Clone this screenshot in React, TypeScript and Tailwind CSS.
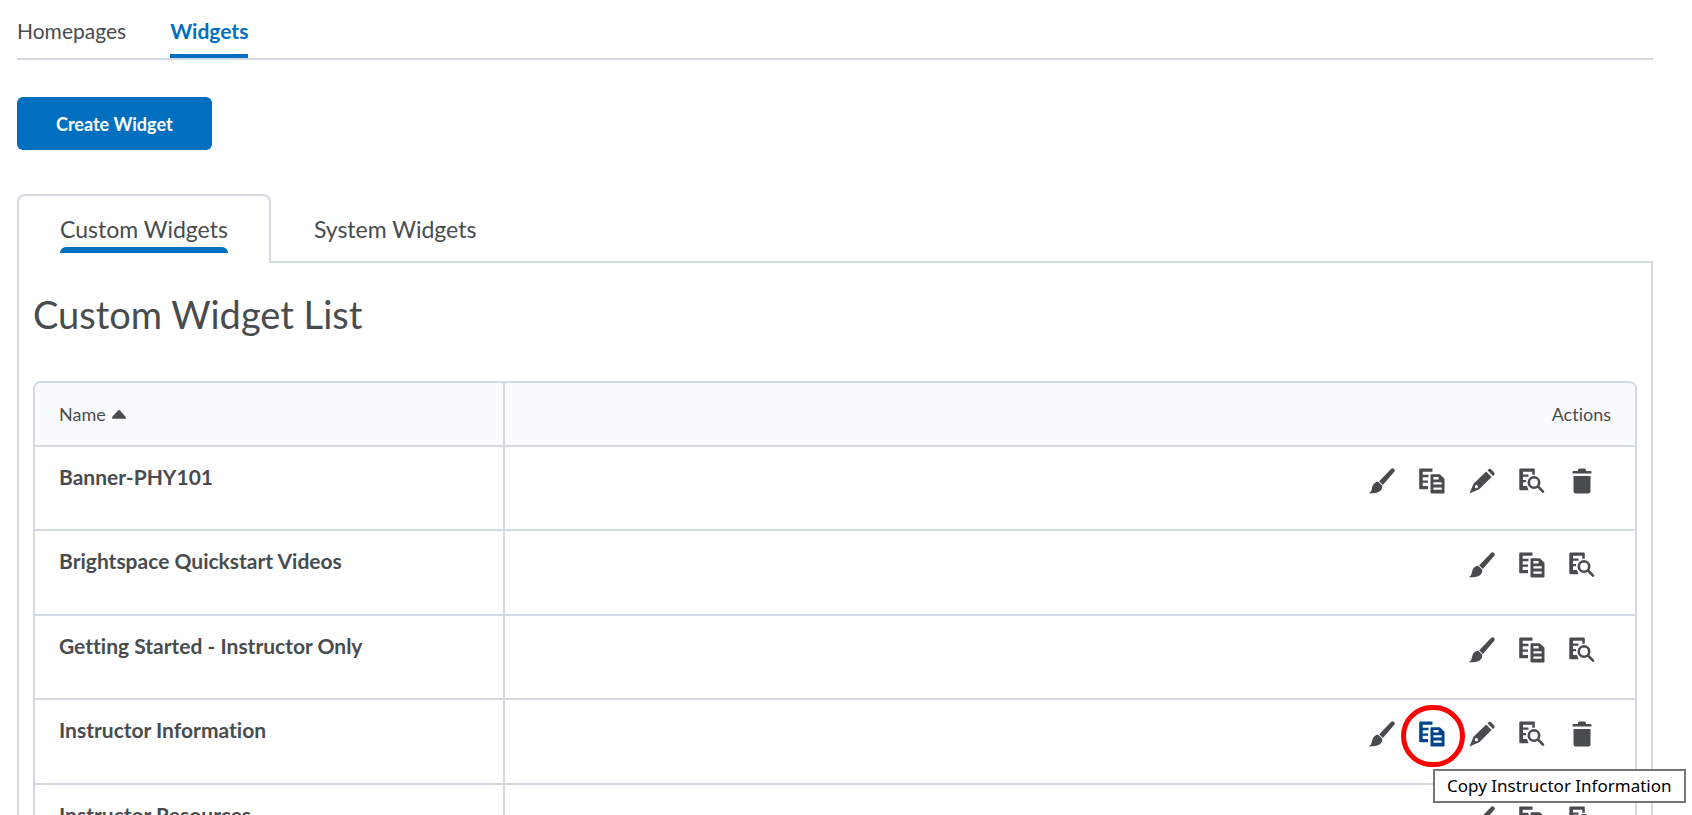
import { useState } from "react";

type Action = "style" | "copy" | "edit" | "preview" | "delete";

interface Widget {
  name: string;
  actions: Action[];
}

const widgets: Widget[] = [
  {
    name: "Banner-PHY101",
    actions: ["style", "copy", "edit", "preview", "delete"],
  },
  {
    name: "Brightspace Quickstart Videos",
    actions: ["style", "copy", "preview"],
  },
  {
    name: "Getting Started - Instructor Only",
    actions: ["style", "copy", "preview"],
  },
  {
    name: "Instructor Information",
    actions: ["style", "copy", "edit", "preview", "delete"],
  },
  { name: "Instructor Resources", actions: ["style", "copy", "preview"] },
];

const labels: Record<Action, string> = {
  style: "Customize",
  copy: "Copy",
  edit: "Edit",
  preview: "Preview",
  delete: "Delete",
};

const ActionIcon = ({ action }: { action: Action }) => {
  return (
    <svg
      viewBox="0 0 26 26"
      className="h-[26px] w-[26px]"
      fill="currentColor"
      aria-hidden="true"
    >
      {action === "style" && (
        <>
          <path d="M22 1.100a2.100 2.100 0 0 1 3.100 3L13.900 16.900l-3.700-3.600z" />
          <path d="M9.300 13.800l4 3.900c.2 3-1.700 5.800-4.900 6.800-2.700.8-5.500.9-8 .9 0-.9.7-1.200 1.400-1.900 1-1.100.9-2.900 1.600-5 .8-2.600 3-4.700 5.900-4.700z" />
        </>
      )}
      {action === "copy" && (
        <>
          <path d="M1.200.5h12.300v3.300H3.700v3h5.800v2.400H3.700v3.200h5.300v2.400H3.700v3.200h5.300v3.300H1.200a1 1 0 0 1-1-1V1.500a1 1 0 0 1 1-1z" />
          <path
            fillRule="evenodd"
            d="M12.500 6.200h8.300l4.700 4.600v13.700a1 1 0 0 1-1 1h-12a1 1 0 0 1-1-1V7.200a1 1 0 0 1 1-1zM14.400 9v2.400h5.200V9zM14.400 14.200v2.300h8.300v-2.300zM14.400 19.500v2.300h8.300v-2.300z"
          />
        </>
      )}
      {action === "edit" && (
        <>
          <path d="M19.300 1.500a2.200 2.200 0 0 1 3 0l2.600 2.700a2.200 2.200 0 0 1 0 3l-.8.8-5.600-5.700z" />
          <path
            fillRule="evenodd"
            d="M17.200 3.600l5.400 5.500L10.200 21.300.5 25.600l4-9.900zM7.300 17.100a1.600 1.600 0 1 0 .1 3.200 1.600 1.600 0 0 0-.1-3.200z"
          />
        </>
      )}
      {action === "preview" && (
        <>
          <path d="M1.300.5h13.500a1 1 0 0 1 1 1v5.300h-2.500V3.800H4v2.700h5.500v2.300H4v3.200h3v2.300H4v3.600h4l1.500 4.300H1.300a1 1 0 0 1-1-1V1.500a1 1 0 0 1 1-1z" />
          <path
            d="M15 9.300a5.200 5.200 0 1 0 0 10.400 5.200 5.200 0 0 0 0-10.400zM19 18.500l5 5.100"
            fill="none"
            stroke="currentColor"
            strokeWidth="2.600"
            strokeLinecap="round"
          />
        </>
      )}
      {action === "delete" && (
        <>
          <path d="M10.500.5h5a1.500 1.500 0 0 1 1.500 1.500v1h4.500a1 1 0 0 1 1 1v1.500h-19V4a1 1 0 0 1 1-1H9V2A1.500 1.500 0 0 1 10.500.5z" />
          <path d="M4.500 8h17v15a2.500 2.500 0 0 1-2.500 2.500H7A2.500 2.500 0 0 1 4.500 23z" />
        </>
      )}
    </svg>
  );
};

const App = () => {
  const [tab, setTab] = useState("Custom Widgets");
  const highlighted = "Instructor Information";

  return (
    <div className="h-screen overflow-hidden bg-white pl-[17px] pr-[39px] font-['Lato',sans-serif] text-[#494c4e] [font-variant-ligatures:none]">
      <nav className="flex gap-11 border-b-2 border-[#d3dae2] pt-[17px] text-[21px] leading-7">
        <a href="#homepages" className="pb-[13px]">
          Homepages
        </a>
        <a
          href="#widgets"
          className="border-b-4 border-[#006fbf] pb-[9px] font-bold text-[#006fbf]"
        >
          Widgets
        </a>
      </nav>

      <button className="mt-[37px] block h-[53px] rounded-md bg-[#006fbf] px-[39px] text-lg font-bold text-white">
        Create Widget
      </button>

      <div className="mt-11 flex" role="tablist">
        {["Custom Widgets", "System Widgets"].map((name) => (
          <button
            key={name}
            role="tab"
            aria-selected={tab === name}
            onClick={() => setTab(name)}
            className={`flex h-[69px] flex-col items-stretch justify-start text-[23px] leading-7 ${
              tab === name
                ? "rounded-t-lg border-x-2 border-t-2 border-[#d3dae2] px-[41px] pt-[19px]"
                : "border-b-2 border-[#d3dae2] px-[43px] pt-[21px]"
            }`}
          >
            <span>{name}</span>
            {tab === name && (
              <span className="mt-1 h-[6px] rounded-t-md bg-[#006fbf]" />
            )}
          </button>
        ))}
        <div className="flex-1 border-b-2 border-[#d3dae2]" />
      </div>

      <div className="border-x-2 border-[#d3dae2] px-[14px] pt-[27px]">
        <h1 className="text-[38px] leading-[48px]">Custom Widget List</h1>

        <table className="mt-[43px] w-full table-fixed border-separate border-spacing-0 rounded-t-lg border-2 border-[#d3dae2]">
          <thead>
            <tr className="h-[64px] bg-[#f9fbff] text-lg">
              <th className="w-[29.4%] rounded-tl-md border-b-2 border-r-2 border-[#d3dae2] px-6 text-left font-normal">
                <button className="flex items-center gap-[6px]">
                  Name
                  <svg
                    viewBox="0 0 14 9"
                    className="h-[9px] w-[14px]"
                    fill="currentColor"
                    aria-hidden="true"
                  >
                    <path d="M6 .5a1.400 1.400 0 0 1 2 0l5.600 6.300c.7.9.3 2-.8 2H1.200c-1.100 0-1.500-1.100-.8-2z" />
                  </svg>
                </button>
              </th>
              <th className="rounded-tr-md border-b-2 border-[#d3dae2] px-6 text-right font-normal">
                Actions
              </th>
            </tr>
          </thead>
          <tbody>
            {widgets.map((widget) => (
              <tr key={widget.name} className="h-[84px] even:h-[85px]">
                <td className="border-b-2 border-r-2 border-[#d3dae2] px-6 pt-4 align-top text-[21px] leading-7 font-bold">
                  {widget.name}
                </td>
                <td className="border-b-2 border-[#d3dae2] pt-[21px] pr-7 align-top">
                  <div className="flex justify-end">
                    {widget.actions.map((action) => {
                      const active =
                        action === "copy" && widget.name === highlighted;
                      return (
                        <button
                          key={action}
                          aria-label={`${labels[action]} ${widget.name}`}
                          className={`relative flex w-[50px] justify-center ${
                            active ? "text-[#004489]" : ""
                          }`}
                        >
                          <ActionIcon action={action} />
                          {active && (
                            <>
                              <span className="absolute -top-4 -left-[6px] h-[62px] w-[64px] rounded-full border-[5px] border-[#ff0000]" />
                              <span
                                role="tooltip"
                                className="absolute top-12 left-[26px] z-10 border-2 border-[#767676] bg-white px-3 font-['Noto_Sans',sans-serif] text-[17px] leading-[30px] whitespace-nowrap text-black"
                              >
                                Copy {widget.name}
                              </span>
                            </>
                          )}
                        </button>
                      );
                    })}
                  </div>
                </td>
              </tr>
            ))}
          </tbody>
        </table>
      </div>
    </div>
  );
};

export default App;
